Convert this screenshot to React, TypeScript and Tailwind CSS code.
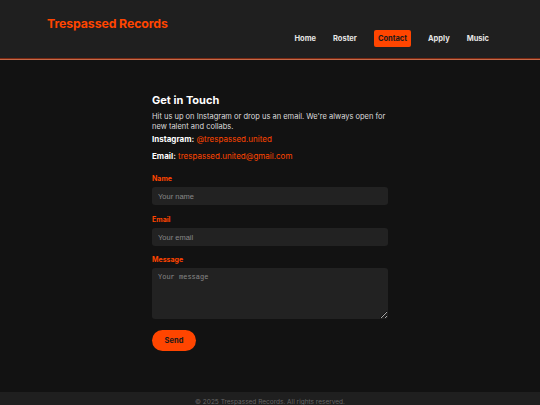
import React from "react";

const font = { fontFamily: "Inter, 'Open Sans', sans-serif" };

export default function App() {
  const links = ["Home", "Roster", "Contact", "Apply", "Music"];
  return (
    <div className="h-[405px] flex flex-col bg-[#121212] text-white overflow-hidden" style={font}>
      {/* Header */}
      <header className="h-[58px] shrink-0 bg-[#1f1f1f] flex justify-between pl-[47px] pr-[51px]">
        <div className="pt-[15px] text-[12.3px] font-bold text-[#ff4500] tracking-[-0.1px]">Trespassed Records</div>
        <nav className="flex items-center gap-[17px] pt-[19px] text-[7.5px] font-bold">
          {links.map((l) =>
            l === "Contact" ? (
              <span key={l} className="bg-[#ff4500] text-[#1a1a1a] rounded-[2px] px-[4px] py-[3px]">{l}</span>
            ) : (
              <span key={l} className="text-[#e6e6e6]">{l}</span>
            )
          )}
        </nav>
      </header>
      <div className="h-[1px] shrink-0 bg-[#7a2810]" />
      <div className="h-[1px] shrink-0 bg-[#c4694a]" />

      {/* Main */}
      <main className="flex-1 flex justify-center pt-[35px]">
        <div className="w-[236px]">
          <h2 className="text-[11px] font-bold leading-none mb-[6px]">Get in Touch</h2>
          <p className="text-[7.5px] leading-[10px] text-[#dddddd]">
            Hit us up on Instagram or drop us an email. We're always open for new talent and collabs.
          </p>
          <p className="text-[8px] mt-[2px] leading-[10px]">
            <span className="font-bold">Instagram:</span> <span className="text-[#ff4500]">@trespassed.united</span>
          </p>
          <p className="text-[8px] mt-[7px] leading-[10px]">
            <span className="font-bold">Email:</span> <span className="text-[#ff4500]">trespassed.united@gmail.com</span>
          </p>

          <form className="mt-[14px] flex flex-col" onSubmit={(e) => e.preventDefault()}>
            <label className="text-[7px] font-bold text-[#ff4500] leading-none">Name</label>
            <input
              placeholder="Your name"
              className="mt-[5px] h-[18px] w-full rounded-[3px] bg-[#222222] px-[6px] text-[7.5px] text-white placeholder:text-[#888] outline-none"
              style={{ fontFamily: "'Liberation Sans', Arial, sans-serif" }}
            />
            <label className="mt-[11px] text-[7px] font-bold text-[#ff4500] leading-none">Email</label>
            <input
              placeholder="Your email"
              className="mt-[5px] h-[18px] w-full rounded-[3px] bg-[#222222] px-[6px] text-[7.5px] text-white placeholder:text-[#888] outline-none"
              style={{ fontFamily: "'Liberation Sans', Arial, sans-serif" }}
            />
            <label className="mt-[10px] text-[7px] font-bold text-[#ff4500] leading-none">Message</label>
            <textarea
              placeholder="Your message"
              className="mt-[5px] h-[51px] w-full rounded-[3px] bg-[#222222] px-[6px] py-[4px] text-[7px] text-white placeholder:text-[#888] outline-none"
              style={{ fontFamily: "'Liberation Mono', monospace" }}
            />
            <button className="mt-[11px] w-[44px] h-[21px] rounded-full bg-[#ff4500] text-[#1a1a1a] text-[7.5px] font-bold">
              Send
            </button>
          </form>
        </div>
      </main>

      {/* Footer */}
      <footer className="h-[13px] shrink-0 bg-[#1f1f1f] flex justify-center pt-[7px]">
        <span className="text-[6.5px] text-[#666] leading-none">© 2025 Trespassed Records. All rights reserved.</span>
      </footer>
    </div>
  );
}
